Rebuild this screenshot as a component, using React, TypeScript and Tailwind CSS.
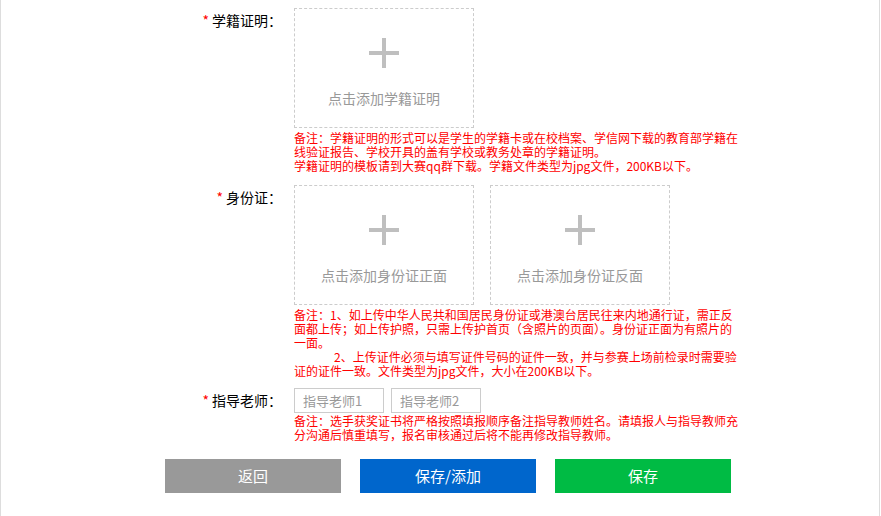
import React from "react";

const font = { fontFamily: '"Noto Sans CJK SC", "Noto Sans", sans-serif' };

const Label = ({ text }: { text: string }) => (
  <div className="w-[293px] shrink-0 pr-[12px] text-right text-[14px] leading-[24px] text-black">
    <span className="mr-[3px] text-[#ff0000]">*</span>
    {text}：
  </div>
);

const PlusIcon = () => (
  <svg width="30" height="30" viewBox="0 0 30 30">
    <rect x="13" y="0" width="4" height="30" fill="#bfbfbf" />
    <rect x="0" y="13" width="30" height="4" fill="#bfbfbf" />
  </svg>
);

const UploadBox = ({ text }: { text: string }) => (
  <div className="flex h-[120px] w-[180px] flex-col items-center border border-dashed border-[#cccccc] pt-[29px]">
    <PlusIcon />
    <div className="mt-[20px] text-[14px] leading-[20px] text-[#999999]">{text}</div>
  </div>
);

const Note = ({ lines, className = "" }: { lines: React.ReactNode[]; className?: string }) => (
  <div className={`whitespace-nowrap text-[12px] leading-[14px] text-[#ff0000] ${className}`}>
    {lines.map((l, i) => (
      <div key={i}>{l}</div>
    ))}
  </div>
);

export default function App() {
  return (
    <div style={font} className="h-[516px] w-[880px] border-x border-[#dddddd] bg-white">
      <div className="flex pt-[8px]">
        <Label text="学籍证明" />
        <div>
          <UploadBox text="点击添加学籍证明" />
          <Note
            className="mt-[3px]"
            lines={[
              "备注：学籍证明的形式可以是学生的学籍卡或在校档案、学信网下载的教育部学籍在",
              "线验证报告、学校开具的盖有学校或教务处章的学籍证明。",
              "学籍证明的模板请到大赛qq群下载。学籍文件类型为jpg文件，200KB以下。",
            ]}
          />
        </div>
      </div>

      <div className="mt-[12px] flex">
        <Label text="身份证" />
        <div>
          <div className="flex gap-[16px]">
            <UploadBox text="点击添加身份证正面" />
            <UploadBox text="点击添加身份证反面" />
          </div>
          <Note
            className="mt-[3px]"
            lines={[
              "备注：1、如上传中华人民共和国居民身份证或港澳台居民往来内地通行证，需正反",
              "面都上传；如上传护照，只需上传护首页（含照片的页面）。身份证正面为有照片的",
              "一面。",
              <span className="pl-[40px]">2、上传证件必须与填写证件号码的证件一致，并与参赛上场前检录时需要验</span>,
              "证的证件一致。文件类型为jpg文件，大小在200KB以下。",
            ]}
          />
        </div>
      </div>

      <div className="mt-[10px] flex">
        <Label text="指导老师" />
        <div>
          <div className="flex gap-[7px]">
            <input
              placeholder="指导老师1"
              className="h-[25px] w-[90px] border border-[#cccccc] px-[8px] text-[13px] text-[#333] outline-none placeholder:text-[#999999]"
            />
            <input
              placeholder="指导老师2"
              className="h-[25px] w-[90px] border border-[#cccccc] px-[8px] text-[13px] text-[#333] outline-none placeholder:text-[#999999]"
            />
          </div>
          <Note
            className="mt-[1px]"
            lines={[
              "备注：选手获奖证书将严格按照填报顺序备注指导教师姓名。请填报人与指导教师充",
              "分沟通后慎重填写，报名审核通过后将不能再修改指导教师。",
            ]}
          />
        </div>
      </div>

      <div className="mt-[17px] flex gap-[19px] pl-[164px]">
        <button className="h-[34px] w-[176px] bg-[#999999] text-[15px] text-white">返回</button>
        <button className="h-[34px] w-[176px] bg-[#0066cc] text-[15px] text-white">保存/添加</button>
        <button className="h-[34px] w-[176px] bg-[#00bb44] text-[15px] text-white">保存</button>
      </div>
    </div>
  );
}
